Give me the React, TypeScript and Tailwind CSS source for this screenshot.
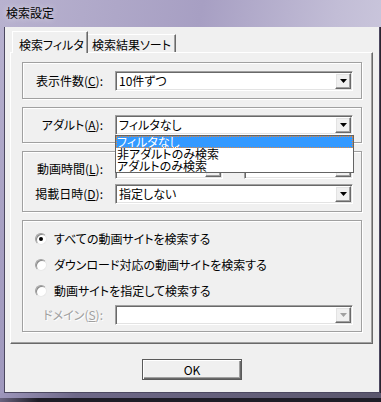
import type { ReactNode } from 'react';

function DropButton({ disabled = false }: { disabled?: boolean }) {
  return (
    <div className="w-[16px] h-[16px] shrink-0 flex items-center justify-center bg-[#f0f0f0] border border-white border-r-[#696969] border-b-[#696969] shadow-[inset_-1px_-1px_0_#a0a0a0,inset_1px_1px_0_#e3e3e3]">
      <svg width="7" height="4" viewBox="0 0 7 4">
        <path d="M0 0h7L3.5 4z" fill={disabled ? '#a0a0a0' : '#000'} />
      </svg>
    </div>
  );
}

function Combo({ text, className = '', disabled = false }: { text?: string; className?: string; disabled?: boolean }) {
  return (
    <div
      className={`h-[20px] flex p-[1px] bg-white border border-[#a0a0a0] border-r-white border-b-white shadow-[inset_1px_1px_0_#696969,inset_-1px_-1px_0_#e3e3e3] ${className}`}
    >
      <div className="flex-1 pl-[2px] leading-[16px] whitespace-nowrap overflow-hidden">{text}</div>
      <DropButton disabled={disabled} />
    </div>
  );
}

function Label({ children, disabled = false }: { children: ReactNode; disabled?: boolean }) {
  return (
    <div
      className={`w-[80px] shrink-0 text-right whitespace-nowrap ${
        disabled ? 'text-[#a0a0a0] [text-shadow:1px_1px_0_#fff]' : ''
      }`}
    >
      {children}
    </div>
  );
}

function Group({ className = '', children }: { className?: string; children: ReactNode }) {
  return (
    <div className={`w-[340px] border border-[#a0a0a0] shadow-[inset_1px_1px_0_#fff,1px_1px_0_#fff] ${className}`}>
      {children}
    </div>
  );
}

function Radio({ checked = false }: { checked?: boolean }) {
  return (
    <div className="w-[12px] h-[12px] shrink-0 rounded-full bg-white border border-[#a0a0a0] border-b-[#e8e8e8] border-r-[#e8e8e8] shadow-[inset_1px_1px_0_#8a8a8a] flex items-center justify-center">
      {checked && <div className="w-[4px] h-[4px] rounded-full bg-black" />}
    </div>
  );
}

function RadioRow({ checked = false, text }: { checked?: boolean; text: string }) {
  return (
    <div className="h-[26px] flex items-center pl-[12px] gap-[7px] whitespace-nowrap">
      <Radio checked={checked} />
      <span>{text}</span>
    </div>
  );
}

export default function App() {
  return (
    <div className="w-[381px] h-[402px] overflow-hidden flex flex-col text-[12px] text-black font-['Noto_Sans_CJK_JP',sans-serif] [font-feature-settings:'palt'] bg-[linear-gradient(100deg,#b8b2cf,#a79fc3_45%,#c2bdd6_75%,#d2cfe2)]">
      {/* title bar */}
      <div className="h-[27px] shrink-0 flex items-center pl-[6px] pb-[2px] text-[12px] [text-shadow:0_0_6px_#ffffffaa]">
        検索設定
      </div>

      <div className="flex shrink-0">
        <div className="w-[4px] shrink-0 bg-[linear-gradient(180deg,#b7b1cf,#a69fc2_60%,#9f98bd)]" />

        {/* client area */}
        <div className="w-[376px] h-[366px] shrink-0 bg-[#f0f0f0] border-l border-r border-b border-[#4c4860] flex flex-col">
          {/* tabs */}
          <div className="h-[25px] shrink-0 flex items-end pl-[7px]">
            <div className="relative z-10 -mb-[1px] w-[76px] h-[22px] pl-[6px] pt-[4px] bg-[#f0f0f0] border-t border-l border-white border-r border-r-[#696969] shadow-[inset_-1px_0_0_#a0a0a0] whitespace-nowrap">
              検索フィルタ
            </div>
            <div className="w-[88px] h-[18px] pl-[4px] pt-[1px] border-t border-white border-r border-r-[#696969] shadow-[inset_-1px_0_0_#a0a0a0] whitespace-nowrap">
              検索結果ソート
            </div>
          </div>

          {/* tab panel */}
          <div className="ml-[5px] w-[363px] h-[292px] shrink-0 border border-white border-r-[#696969] border-b-[#696969] shadow-[inset_-1px_-1px_0_#a0a0a0] pl-[11px] pt-[9px] flex flex-col gap-[8px]">
            <Group className="h-[37px] flex items-center">
              <Label>
                表示件数(<u>C</u>):
              </Label>
              <Combo text="10件ずつ" className="ml-[12px] w-[238px]" />
            </Group>

            <Group className="relative z-20 h-[36px] flex items-center">
              <Label>
                アダルト(<u>A</u>):
              </Label>
              <div className="relative ml-[12px] w-[238px]">
                <Combo text="フィルタなし" className="w-[238px]" />
                {/* open dropdown list */}
                <div className="absolute left-0 top-[20px] w-[239px] h-[38px] bg-white border border-[#646464] flex flex-col">
                  <div className="h-[12px] leading-[11px] pl-[1px] bg-[#3399ff] text-white outline outline-1 outline-dotted outline-[#e8893a] -outline-offset-1 whitespace-nowrap">
                    フィルタなし
                  </div>
                  <div className="h-[12px] leading-[12px] pl-[1px] whitespace-nowrap">非アダルトのみ検索</div>
                  <div className="h-[12px] leading-[12px] pl-[1px] whitespace-nowrap">アダルトのみ検索</div>
                </div>
              </div>
            </Group>

            <Group className="h-[61px] flex flex-col justify-center gap-[5px]">
              <div className="flex items-center">
                <Label>
                  動画時間(<u>L</u>):
                </Label>
                {/* mostly hidden under the open list */}
                <div className="ml-[12px] w-[238px] flex items-center">
                  <Combo className="w-[108px]" />
                  <div className="w-[21px]" />
                  <Combo className="w-[109px]" />
                </div>
              </div>
              <div className="flex items-center">
                <Label>
                  掲載日時(<u>D</u>):
                </Label>
                <Combo text="指定しない" className="ml-[12px] w-[238px]" />
              </div>
            </Group>

            <Group className="h-[112px] pt-[5px] flex flex-col">
              <RadioRow checked text="すべての動画サイトを検索する" />
              <RadioRow text="ダウンロード対応の動画サイトを検索する" />
              <RadioRow text="動画サイトを指定して検索する" />
              <div className="flex items-center mt-[1px]">
                <Label disabled>
                  ドメイン(<u>S</u>):
                </Label>
                <Combo disabled className="ml-[12px] w-[238px]" />
              </div>
            </Group>
          </div>

          {/* OK */}
          <div className="flex justify-center mt-[15px]">
            <button className="w-[100px] h-[21px] bg-[#f0f0f0] border border-[#5a5a5a] shadow-[inset_1px_1px_0_#fff,inset_-1px_-1px_0_#696969,inset_-2px_-2px_0_#a0a0a0] leading-[18px]">
              OK
            </button>
          </div>
        </div>

        <div className="w-[1px] shrink-0 bg-[#2a2430]" />
      </div>

      {/* bottom frame */}
      <div className="flex-1 flex flex-col">
        <div className="h-[5px] bg-[linear-gradient(90deg,#9d96bb,#6e6888_20%,#5a566c)]" />
        <div className="flex-1 bg-[linear-gradient(90deg,#6a6480,#1e1c26_10%,#1e1c26)]" />
      </div>
    </div>
  );
}
